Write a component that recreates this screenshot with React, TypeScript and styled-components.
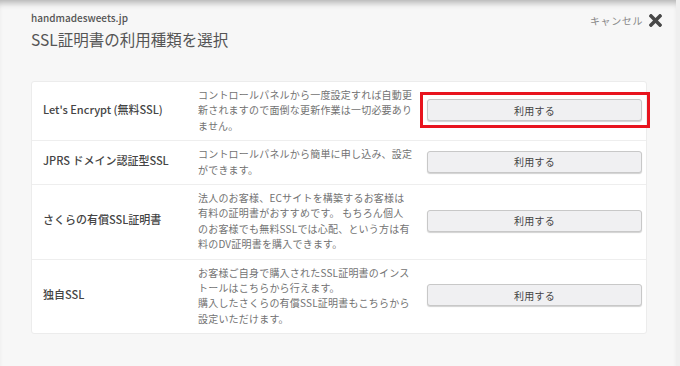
import styled, { createGlobalStyle } from "styled-components";
import { FaTimes } from "react-icons/fa";

type TPlan = {
  name: string;
  lines: string[];
  highlighted?: boolean;
};

const plans: TPlan[] = [
  {
    name: "Let's Encrypt (無料SSL)",
    lines: [
      "コントロールパネルから一度設定すれば自動更",
      "新されますので面倒な更新作業は一切必要あり",
      "ません。",
    ],
    highlighted: true,
  },
  {
    name: "JPRS ドメイン認証型SSL",
    lines: ["コントロールパネルから簡単に申し込み、設定", "ができます。"],
  },
  {
    name: "さくらの有償SSL証明書",
    lines: [
      "法人のお客様、ECサイトを構築するお客様は",
      "有料の証明書がおすすめです。 もちろん個人",
      "のお客様でも無料SSLでは心配、という方は有",
      "料のDV証明書を購入できます。",
    ],
  },
  {
    name: "独自SSL",
    lines: [
      "お客様ご自身で購入されたSSL証明書のインス",
      "トールはこちらから行えます。",
      "購入したさくらの有償SSL証明書もこちらから",
      "設定いただけます。",
    ],
  },
];

export default function App() {
  return (
    <>
      <GlobalStyle />
      <Page>
        <Header>
          <TitleBlock>
            <Domain>handmadesweets.jp</Domain>
            <Title>SSL証明書の利用種類を選択</Title>
          </TitleBlock>
          <CancelButton>
            <CancelText>キャンセル</CancelText>
            <FaTimes size={19} />
          </CancelButton>
        </Header>
        <PlanTable>
          {plans.map((plan) => (
            <PlanRow key={plan.name}>
              <PlanName>{plan.name}</PlanName>
              <PlanDescription>
                {plan.lines.map((line) => (
                  <DescLine key={line}>{line}</DescLine>
                ))}
              </PlanDescription>
              <ButtonCell highlighted={plan.highlighted}>
                <UseButton>利用する</UseButton>
              </ButtonCell>
            </PlanRow>
          ))}
        </PlanTable>
      </Page>
    </>
  );
}

const GlobalStyle = createGlobalStyle`
  html, body {
    margin: 0;
    padding: 0;
    background: #f7f7f7;
  }
  body {
    font-family: "Noto Sans CJK JP", "Noto Sans", sans-serif;
  }
`;

const Page = styled.div`
  width: 680px;
  height: 366px;
  box-sizing: border-box;
  background: #f7f7f7;
  border-right: 4px solid #efefef;
  box-shadow: inset 0 7px 6px -4px rgba(0, 0, 0, 0.28);
  overflow: hidden;
`;

const Header = styled.div`
  display: flex;
  justify-content: space-between;
  align-items: flex-start;
  padding: 11px 11px 0 31px;
`;

const TitleBlock = styled.div`
  display: flex;
  flex-direction: column;
`;

const Domain = styled.span`
  color: #555;
  font-size: 10px;
  font-weight: 500;
  line-height: 14px;
`;

const Title = styled.h1`
  margin: 3px 0 0;
  color: #555;
  font-size: 15.5px;
  font-weight: 400;
  line-height: 22px;
`;

const CancelButton = styled.div`
  display: flex;
  align-items: center;
  gap: 3px;
  color: #484848;
`;

const CancelText = styled.span`
  color: #888;
  font-size: 10px;
  letter-spacing: 0.6px;
`;

const PlanTable = styled.div`
  width: 616px;
  margin: 31px 0 0 31px;
  background: #fff;
  border: 1px solid #ececec;
  border-radius: 3px;
  box-sizing: border-box;
`;

const PlanRow = styled.div`
  display: grid;
  grid-template-columns: 166px 229px 1fr;
  align-items: center;
  padding: 5px 0 7px;

  & + & {
    border-top: 1px solid #eeeeee;
  }
`;

const PlanName = styled.span`
  padding-left: 11px;
  padding-bottom: 3px;
  color: #444;
  font-size: 11px;
  font-weight: 500;
`;

const PlanDescription = styled.div`
  display: flex;
  flex-direction: column;
  color: #727272;
  font-size: 10px;
  letter-spacing: 0.2px;
  line-height: 15.4px;
`;

const DescLine = styled.span`
  white-space: nowrap;
`;

const ButtonCell = styled.div<{ highlighted?: boolean }>`
  position: relative;
  padding-right: 4px;

  &::after {
    content: "";
    display: ${(props) => (props.highlighted ? "block" : "none")};
    position: absolute;
    top: -7px;
    bottom: -7px;
    left: -7px;
    right: -4px;
    border: 3px solid #e8141e;
  }
`;

const UseButton = styled.button`
  display: block;
  width: 100%;
  height: 22px;
  padding: 0;
  background: #f0f0f2;
  border: 1px solid #c8c8c8;
  border-radius: 3px;
  box-shadow: 0 1px 1px rgba(0, 0, 0, 0.18);
  color: #444;
  font-family: "Noto Sans CJK JP", "Noto Sans", sans-serif;
  font-size: 10px;
  letter-spacing: 0.3px;
`;
